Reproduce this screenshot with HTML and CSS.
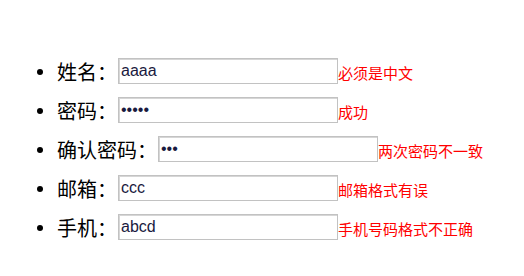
FILE: index.html
```html
<!DOCTYPE html>
<html>

<head>
    <meta charset="utf-8" />
    <title>注册</title>
    <link rel="stylesheet" href="styles.css">
</head>

<body>
    <ul class="form">
        <li>
            <span class="label">姓名：</span><input class="field" type="text" value="aaaa"><span class="msg">必须是中文</span>
        </li>
        <li>
            <span class="label">密码：</span><input class="field" type="password" value="aaaaa"><span class="msg">成功</span>
        </li>
        <li>
            <span class="label">确认密码：</span><input class="field" type="password" value="aaa"><span class="msg">两次密码不一致</span>
        </li>
        <li>
            <span class="label">邮箱：</span><input class="field" type="text" value="ccc"><span class="msg">邮箱格式有误</span>
        </li>
        <li>
            <span class="label">手机：</span><input class="field" type="text" value="abcd"><span class="msg">手机号码格式不正确</span>
        </li>
    </ul>
</body>

</html>
```

FILE: styles.css
```css
body {
    margin: 0;
    background: #fff;
    font-family: "Noto Sans CJK SC", sans-serif;
    color: #000;
}

.form {
    margin: 58px 0 0 0;
    padding-left: 57px;
    font-size: 20px;
}

.form li {
    display: flex;
    align-items: center;
    height: 26px;
    margin-bottom: 13px;
    list-style: none;
    position: relative;
}

.form li::before {
    content: "";
    position: absolute;
    left: -20px;
    top: 11px;
    width: 6px;
    height: 6px;
    border-radius: 50%;
    background: #000;
}

.label {
    flex: none;
    margin-right: 1px;
    white-space: nowrap;
}

.field {
    flex: none;
    box-sizing: border-box;
    width: 220px;
    height: 26px;
    margin: 0;
    padding: 0 2px;
    border: 1px solid #c2c2c2;
    box-shadow: inset 1px 1px 0 #d6d6d6;
    font-family: "Liberation Sans", Arial, sans-serif;
    font-size: 16px;
    color: #1a1a40;
}

.msg {
    font-size: 15px;
    color: #f00;
    margin-top: 2px;
    white-space: nowrap;
}
```
